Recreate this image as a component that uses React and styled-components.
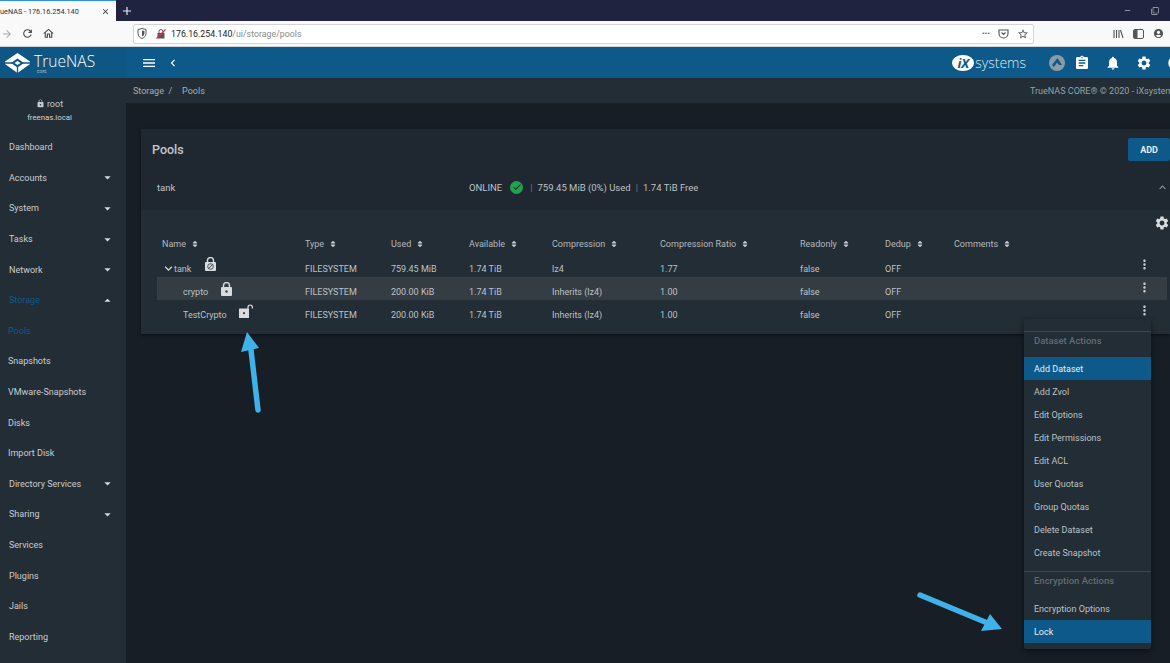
import React from "react";
import styled, { createGlobalStyle } from "styled-components";
import { MdLock, MdSettings, MdNotifications, MdAssignment, MdMoreVert, MdArrowDropDown, MdArrowDropUp, MdCheck, MdKeyboardArrowDown, MdKeyboardArrowUp, MdKeyboardArrowLeft, MdMenu, MdRefresh, MdOutlineHome, MdClose, MdAdd, MdStarBorder, MdArrowForward, MdAccountCircle, MdRemove, MdFilterNone } from "react-icons/md";
import { FaSort } from "react-icons/fa";

const Global = createGlobalStyle`
  html, body { margin: 0; padding: 0; background: #171e26; overflow: hidden; }
  * { box-sizing: border-box; }
  body { font-family: Roboto, "Liberation Sans", sans-serif; }
`;

const Page = styled.div`
  position: relative;
  width: 1170px;
  height: 663px;
  overflow: hidden;
  display: flex;
  flex-direction: column;
  background: #171e26;
`;

const TabStrip = styled.div`
  height: 21px;
  flex: none;
  display: flex;
  align-items: stretch;
  background: #202340;
  color: #e8e8ee;
`;

const Tab = styled.div`
  width: 116px;
  background: #fafafb;
  border-top: 1px solid #2b8fe8;
  color: #333;
  font-size: 7.3px;
  display: flex;
  align-items: center;
  justify-content: space-between;
  padding: 0 6px 0 0;
  overflow: hidden;
  white-space: nowrap;
`;

const NewTab = styled.div`
  width: 22px;
  display: flex;
  align-items: center;
  justify-content: center;
`;

const WindowButtons = styled.div`
  margin-left: auto;
  display: flex;
  align-items: center;
  gap: 19px;
  padding-right: 11px;
  color: #b5b6c4;
`;

const Toolbar = styled.div`
  height: 26px;
  flex: none;
  display: flex;
  align-items: center;
  background: #f9f9fa;
  color: #444;
  border-bottom: 1px solid #d0d3d6;
`;

const NavIcons = styled.div`
  width: 133px;
  display: flex;
  align-items: center;
  gap: 8px;
  padding-left: 1px;
  svg:first-child { color: #aaa; }
`;

const UrlBar = styled.div`
  width: 901px;
  height: 20px;
  background: #fff;
  border: 1px solid #d4d4d6;
  border-radius: 2px;
  display: flex;
  align-items: center;
  padding: 0 4px 0 3px;
  font-size: 8.8px;
  color: #8a8a8a;
  gap: 4px;
  b { font-weight: 400; color: #222; }
`;

const UrlEnd = styled.div`
  margin-left: auto;
  display: flex;
  align-items: center;
  gap: 8px;
  color: #555;
  font-size: 8px;
`;

const BrowserTools = styled.div`
  margin-left: 79px;
  display: flex;
  align-items: center;
  gap: 9px;
  color: #555;
`;

const AppHeader = styled.header`
  height: 31px;
  flex: none;
  display: flex;
  align-items: center;
  background: #0d5a8a;
  color: #fff;
`;

const Brand = styled.div`
  width: 126px;
  height: 100%;
  flex: none;
  display: flex;
  align-items: center;
  gap: 4px;
  padding-left: 5px;
  background: #0e5784;
`;

const BrandName = styled.div`
  position: relative;
  font-size: 15.6px;
  font-weight: 300;
  font-family: "Open Sans", Roboto, sans-serif;
  line-height: 18px;
  margin-top: -3px;
  small {
    position: absolute;
    left: 3px;
    top: 18px;
    font-size: 3.5px;
    line-height: 4px;
    letter-spacing: 0.3px;
    font-family: Roboto, sans-serif;
  }
`;

const HeaderTools = styled.div`
  display: flex;
  align-items: center;
  padding-left: 15px;
  gap: 9px;
`;

const HeaderRight = styled.div`
  margin-left: auto;
  display: flex;
  align-items: center;
  margin-right: -13px;
`;

const IxLogo = styled.div`
  display: flex;
  align-items: center;
  margin-right: 23px;
  font-size: 14px;
  font-weight: 300;
  font-family: "Open Sans", Roboto, sans-serif;
  color: #dfe9f0;
`;

const IxMark = styled.span`
  background: #fff;
  color: #0d5a8a;
  border-radius: 50%;
  width: 22px;
  height: 16px;
  font-size: 13px;
  font-weight: 700;
  font-style: italic;
  line-height: 16px;
  text-align: center;
  margin-right: 1px;
`;

const HeaderIcons = styled.div`
  display: flex;
  align-items: center;
  gap: 15px;
`;

const RoundMark = styled.span`
  width: 16px;
  height: 16px;
  border-radius: 50%;
  background: #8d9ba6;
  display: flex;
  align-items: center;
  justify-content: center;
  margin-right: -6px;
`;

const Body = styled.div`
  flex: 1;
  display: flex;
  min-height: 0;
`;

const Sidebar = styled.nav`
  width: 126px;
  flex: none;
  background: #232d35;
  color: #c9ced2;
`;

const UserBlock = styled.div`
  width: 99px;
  height: 54px;
  padding-top: 20px;
  text-align: center;
  font-size: 9px;
  line-height: 13px;
  color: #c4c9cd;
  div:last-child { font-size: 7.8px; color: #d0d4d8; }
  svg { vertical-align: -1px; margin-right: 2px; }
`;

const NavItem = styled.div`
  height: 30.6px;
  display: flex;
  align-items: center;
  justify-content: space-between;
  padding: 0 11px 0 ${(p) => (p.$sub ? 8 : 9)}px;
  font-size: 9px;
  color: ${(p) => (p.$active ? "#0d5a8a" : "#c9ced2")};
  svg { color: #d5d9dc; }
`;

const Main = styled.main`
  flex: 1;
  min-width: 0;
`;

const Crumbs = styled.div`
  height: 25px;
  background: #232d35;
  display: flex;
  align-items: center;
  justify-content: space-between;
  padding: 0 7px;
  font-size: 9px;
  color: #a6adb2;
  white-space: nowrap;
  span + span { margin-left: 10px; }
`;

const Copyright = styled.div`
  margin-right: -7px;
  width: 140px;
  overflow: hidden;
  color: #98a0a6;
`;

const Card = styled.section`
  width: 1029px;
  margin: 26px 0 0 15px;
  background: #1f2730;
  box-shadow: 0 1px 3px rgba(0, 0, 0, 0.5);
`;

const CardHead = styled.div`
  height: 39px;
  display: flex;
  align-items: center;
  justify-content: space-between;
  padding: 2px 0 0 11px;
  font-size: 12.5px;
  font-weight: 500;
  color: #c2c7cb;
`;

const AddButton = styled.button`
  width: 42px;
  height: 23px;
  border: none;
  border-radius: 2px;
  background: #0d5a8a;
  color: #e6edf2;
  font: 700 9px Roboto, sans-serif;
`;

const PoolRow = styled.div`
  height: 42px;
  display: flex;
  align-items: center;
  padding: 0 1px 4px 16px;
  font-size: 9.5px;
  color: #c0c5c9;
`;

const PoolName = styled.div`
  width: 312px;
`;

const PoolStatus = styled.div`
  display: flex;
  align-items: center;
  flex: 1;
  color: #bcc2c6;
  i { font-style: normal; color: #6f787f; margin: 0 5px; }
`;

const OkBadge = styled.span`
  width: 13px;
  height: 13px;
  margin-left: 8px;
  border-radius: 50%;
  background: #1ea54c;
  color: #18222a;
  display: flex;
  align-items: center;
  justify-content: center;
`;

const TablePanel = styled.div`
  position: relative;
  height: 124px;
  padding-top: 23px;
  background: #232d35;
`;

const PanelGear = styled.div`
  position: absolute;
  right: 0;
  top: 5px;
  color: #d8dcdf;
  display: flex;
`;

const Row = styled.div`
  display: grid;
  grid-template-columns: 143px 86px 78px 83px 108px 140px 85px 69px 190px 20px;
  align-items: center;
  width: 1010px;
  margin-left: 16px;
  padding-left: 5px;
  height: ${(p) => (p.$head ? 21 : 23)}px;
  font-size: 9px;
  color: ${(p) => (p.$head ? "#b3b9be" : "#bcc2c6")};
  background: ${(p) => (p.$band ? "#343c44" : "transparent")};
`;

const HeadCell = styled.div`
  display: flex;
  align-items: center;
  gap: 5px;
  svg { color: #c8cdd1; }
`;

const TextCell = styled.div`
  padding-top: 6px;
`;

const NameCell = styled.div`
  display: flex;
  align-items: center;
  padding-left: ${(p) => p.$indent}px;
  svg { color: #d8dcdf; }
`;

const LockSlot = styled.span`
  display: flex;
  margin-left: ${(p) => p.$gap}px;
  margin-top: ${(p) => p.$lift}px;
`;

const Dots = styled.div`
  display: flex;
  justify-content: center;
  color: #c8cdd1;
  margin: -2px 0 0 -20px;
`;

const Menu = styled.div`
  position: absolute;
  left: 1024px;
  top: 319px;
  width: 127px;
  height: 330px;
  padding-top: 12px;
  background: #232d35;
  border-radius: 2px;
  box-shadow: 0 2px 6px rgba(0, 0, 0, 0.5);
`;

const MenuTitle = styled.div`
  height: 26px;
  padding: 1px 10px 0;
  border-top: 1px solid #3d464d;
  font-size: 9.5px;
  font-weight: 500;
  color: #626b72;
  line-height: 16px;
`;

const MenuItem = styled.div`
  height: 23px;
  line-height: 24px;
  padding: 0 10px;
  font-size: 9px;
  color: ${(p) => (p.$on ? "#e8eef2" : "#bcc2c6")};
  background: ${(p) => (p.$on ? "#0d5a8a" : "transparent")};
`;

const MenuGap = styled.div`
  height: 7px;
`;

const Arrow = styled.svg`
  position: absolute;
  pointer-events: none;
`;

const navItems = [
  { name: "Dashboard" },
  { name: "Accounts", caret: "down" },
  { name: "System", caret: "down" },
  { name: "Tasks", caret: "down" },
  { name: "Network", caret: "down" },
  { name: "Storage", caret: "up", active: true },
  { name: "Pools", active: true, sub: true },
  { name: "Snapshots", sub: true },
  { name: "VMware-Snapshots", sub: true },
  { name: "Disks", sub: true },
  { name: "Import Disk", sub: true },
  { name: "Directory Services", caret: "down" },
  { name: "Sharing", caret: "down" },
  { name: "Services" },
  { name: "Plugins" },
  { name: "Jails" },
  { name: "Reporting" },
];

const columns = ["Name", "Type", "Used", "Available", "Compression", "Compression Ratio", "Readonly", "Dedup", "Comments"];

const rows = [
  { name: "tank", used: "759.45 MiB", compression: "lz4", ratio: "1.77" },
  { name: "crypto", used: "200.00 KiB", compression: "Inherits (lz4)", ratio: "1.00", band: true },
  { name: "TestCrypto", used: "200.00 KiB", compression: "Inherits (lz4)", ratio: "1.00" },
];

const menuItems = ["Add Dataset", "Add Zvol", "Edit Options", "Edit Permissions", "Edit ACL", "User Quotas", "Group Quotas", "Delete Dataset", "Create Snapshot"];

const TrueNasMark = () => (
  <svg width="25" height="20" viewBox="0 0 25 20">
    <path d="M12.5 0 L25 8.5 V11 L12.5 20 L0 11 V8.5 Z" fill="#fff" />
    <path d="M12.5 5.5 L19 10 L12.5 14.5 L6 10 Z" fill="#0e5784" />
    <path d="M12.5 8 L15.5 10 L12.5 12 L9.5 10 Z" fill="#fff" />
    <path d="M0 10 H7 M18 10 H25 M12.5 14 V20" stroke="#0e5784" strokeWidth="1.3" fill="none" />
  </svg>
);

const LockIcon = ({ slashed }) => (
  <svg width="11" height="14" viewBox="0 0 11 14">
    <path d="M2.5 6V3.6a3 3 0 0 1 6 0V6" fill="none" stroke="#d8dcdf" strokeWidth="1.4" />
    <rect x="0" y="5" width="11" height="9" rx="1" fill="#d8dcdf" />
    {slashed ? (
      <>
        <circle cx="5.5" cy="9.5" r="2.8" fill="none" stroke="#3a4249" strokeWidth="0.9" />
        <path d="M3.6 11.5 L7.4 7.5" stroke="#3a4249" strokeWidth="0.9" />
      </>
    ) : (
      <circle cx="5.5" cy="9.5" r="1.2" fill="#3a4249" />
    )}
  </svg>
);

const OpenLockIcon = () => (
  <svg width="14" height="14" viewBox="0 0 14 14">
    <path d="M9 5V3.2a2.2 2.2 0 0 1 4.4 0V4.5" fill="none" stroke="#d8dcdf" strokeWidth="1.2" />
    <rect x="0" y="4.5" width="10" height="9.5" rx="0.6" fill="#d8dcdf" />
    <circle cx="5" cy="9.2" r="1.1" fill="#3a4249" />
  </svg>
);

export default function App() {
  return (
    <Page>
      <Global />
      <TabStrip>
        <Tab>
          <span>ueNAS - 176.16.254.140</span>
          <MdClose size={9} />
        </Tab>
        <NewTab><MdAdd size={14} /></NewTab>
        <WindowButtons>
          <MdRemove size={9} />
          <MdFilterNone size={8} />
        </WindowButtons>
      </TabStrip>
      <Toolbar>
        <NavIcons>
          <MdArrowForward size={12} />
          <MdRefresh size={13} />
          <MdOutlineHome size={13} />
        </NavIcons>
        <UrlBar>
          <svg width="10" height="11" viewBox="0 0 10 11">
            <path d="M5 .5 L9 1.5 V5.5 C9 8 7 9.8 5 10.5 C3 9.8 1 8 1 5.5 V1.5 Z" fill="none" stroke="#555" strokeWidth="1" />
            <path d="M5 2.5 L7.4 3 V5.5 C7.4 7 6.2 8 5 8.5 Z" fill="#555" />
          </svg>
          <svg width="10" height="10" viewBox="0 0 10 10" style={{ marginLeft: 5 }}>
            <rect x="1.5" y="4" width="7" height="5.5" fill="#555" />
            <path d="M3 4V2.5a2 2 0 0 1 4 0V4" fill="none" stroke="#555" />
            <path d="M.5 9.5 L9.5 .5" stroke="#e22850" strokeWidth="1.3" />
          </svg>
          <span style={{ marginLeft: 1 }}><b>176.16.254.140</b>/ui/storage/pools</span>
          <UrlEnd>
            <span>•••</span>
            <svg width="11" height="10" viewBox="0 0 11 10">
              <path d="M1 1 H10 V4.5 a4.5 4.5 0 0 1 -9 0 Z" fill="none" stroke="#555" strokeWidth="1.1" />
              <path d="M3.5 3.5 L5.5 5.5 L7.5 3.5" fill="none" stroke="#555" strokeWidth="1.1" />
            </svg>
            <MdStarBorder size={12} />
          </UrlEnd>
        </UrlBar>
        <BrowserTools>
          <svg width="11" height="10" viewBox="0 0 11 10">
            <path d="M1 1V9 M3.5 1V9 M6 1V9 M7.5 1L10 9" stroke="#555" strokeWidth="1.1" />
          </svg>
          <svg width="11" height="10" viewBox="0 0 11 10">
            <rect x=".5" y=".5" width="10" height="9" rx="1.5" fill="none" stroke="#555" />
            <rect x="1" y="1" width="3.5" height="8" fill="#555" />
          </svg>
          <MdAccountCircle size={11} />
        </BrowserTools>
      </Toolbar>
      <AppHeader>
        <Brand>
          <TrueNasMark />
          <BrandName>TrueNAS<small>CORE</small></BrandName>
        </Brand>
        <HeaderTools>
          <MdMenu size={16} />
          <MdKeyboardArrowLeft size={14} />
        </HeaderTools>
        <HeaderRight>
          <IxLogo><IxMark>iX</IxMark>systems</IxLogo>
          <HeaderIcons>
            <RoundMark>
              <svg width="10" height="10" viewBox="0 0 10 10" fill="#0d5a8a">
                <path d="M5.5 0 L10 7 L7 7 L5 4.5 L2 9 L0 7 Z" />
              </svg>
            </RoundMark>
            <MdAssignment size={16} />
            <MdNotifications size={16} />
            <MdSettings size={16} />
            <MdAccountCircle size={16} />
          </HeaderIcons>
        </HeaderRight>
      </AppHeader>
      <Body>
        <Sidebar>
          <UserBlock>
            <div><MdLock size={9} />root</div>
            <div>freenas.local</div>
          </UserBlock>
          {navItems.map((item) => (
            <NavItem key={item.name} $active={item.active} $sub={item.sub}>
              {item.name}
              {item.caret === "down" && <MdArrowDropDown size={15} />}
              {item.caret === "up" && <MdArrowDropUp size={15} />}
            </NavItem>
          ))}
        </Sidebar>
        <Main>
          <Crumbs>
            <div><span>Storage&nbsp; /</span><span>Pools</span></div>
            <Copyright>TrueNAS CORE® © 2020 - iXsystems</Copyright>
          </Crumbs>
          <Card>
            <CardHead>
              Pools
              <AddButton>ADD</AddButton>
            </CardHead>
            <PoolRow>
              <PoolName>tank</PoolName>
              <PoolStatus>
                ONLINE
                <OkBadge><MdCheck size={10} /></OkBadge>
                <i style={{ marginLeft: 7 }}>|</i>
                759.45 MiB (0%) Used
                <i>|</i>
                1.74 TiB Free
              </PoolStatus>
              <MdKeyboardArrowUp size={13} color="#8f979d" />
            </PoolRow>
            <TablePanel>
              <PanelGear><MdSettings size={16} /></PanelGear>
              <Row $head>
                {columns.map((col) => (
                  <HeadCell key={col}>{col}<FaSort size={8} /></HeadCell>
                ))}
                <div />
              </Row>
              {rows.map((row, i) => (
                <Row key={row.name} $band={row.band}>
                  <NameCell $indent={i === 0 ? 0 : 21}>
                    {i === 0 && <MdKeyboardArrowDown size={15} style={{ margin: "5px -2px 0 -1px" }} />}
                    <TextCell>{row.name}</TextCell>
                    {i === 0 && <LockSlot $gap={14} $lift={-4}><LockIcon slashed /></LockSlot>}
                    {i === 1 && <LockSlot $gap={13} $lift={0}><LockIcon /></LockSlot>}
                    {i === 2 && <LockSlot $gap={12} $lift={-2}><OpenLockIcon /></LockSlot>}
                  </NameCell>
                  <TextCell>FILESYSTEM</TextCell>
                  <TextCell>{row.used}</TextCell>
                  <TextCell>1.74 TiB</TextCell>
                  <TextCell>{row.compression}</TextCell>
                  <TextCell>{row.ratio}</TextCell>
                  <TextCell>false</TextCell>
                  <TextCell>OFF</TextCell>
                  <div />
                  <Dots><MdMoreVert size={15} /></Dots>
                </Row>
              ))}
            </TablePanel>
          </Card>
        </Main>
      </Body>
      <Menu>
        <MenuTitle>Dataset Actions</MenuTitle>
        {menuItems.map((label, i) => (
          <MenuItem key={label} $on={i === 0}>{label}</MenuItem>
        ))}
        <MenuGap />
        <MenuTitle>Encryption Actions</MenuTitle>
        <MenuItem>Encryption Options</MenuItem>
        <MenuItem $on>Lock</MenuItem>
      </Menu>
      <Arrow width="40" height="90" viewBox="0 0 40 90" style={{ left: 235, top: 328 }}>
        <path d="M16 22 L23 82" stroke="#3fb2ea" strokeWidth="5.5" strokeLinecap="round" />
        <path d="M12 4 L24 20 L6 24 Z" fill="#3fb2ea" />
      </Arrow>
      <Arrow width="90" height="48" viewBox="0 0 90 48" style={{ left: 915, top: 590 }}>
        <path d="M5 5 L70 32" stroke="#3fb2ea" strokeWidth="5.5" strokeLinecap="round" />
        <path d="M87 39 L66 41 L75 24 Z" fill="#3fb2ea" />
      </Arrow>
    </Page>
  );
}
